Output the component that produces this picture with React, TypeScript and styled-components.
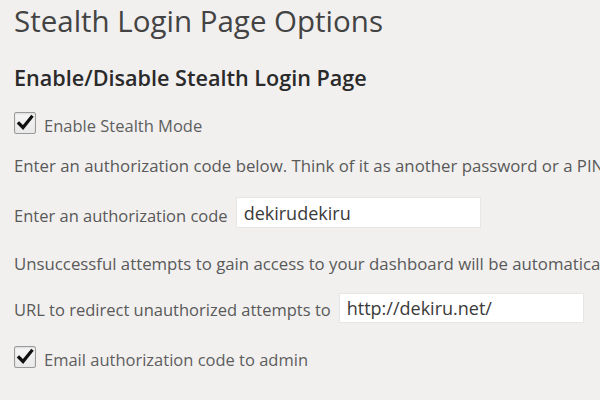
import React from "react";
import styled, { createGlobalStyle } from "styled-components";

const Global = createGlobalStyle`
  html, body { margin: 0; padding: 0; background: #f1f0ef; }
  body { width: 600px; height: 400px; overflow: hidden; }
  * { box-sizing: border-box; }
`;

const Page = styled.div`
  width: 600px;
  height: 400px;
  overflow: hidden;
  padding-left: 14px;
  background: #f1f0ef;
  font-family: "Open Sans", "Noto Sans", sans-serif;
  display: flex;
  flex-direction: column;
  white-space: nowrap;
`;

const Title = styled.h1`
  margin: 3px 0 0;
  font-size: 29.5px;
  line-height: 36px;
  font-weight: 400;
  color: #434343;
`;

const Subtitle = styled.h2`
  margin: 25px 0 0;
  font-size: 21.6px;
  line-height: 28px;
  font-weight: 600;
  color: #2a2a2a;
`;

const CheckRow = styled.label<{ $mt: number }>`
  margin-top: ${(p) => p.$mt}px;
  display: flex;
  align-items: flex-start;
  gap: 8px;
  height: 27px;
`;

const Box = styled.span`
  width: 22px;
  height: 22px;
  flex: none;
  border: 1px solid #9a9a9a;
  border-radius: 2px;
  background: linear-gradient(#f7f7f7, #e9e9e9);
  box-shadow: inset 0 1px 2px rgba(0, 0, 0, 0.12);
  display: flex;
  align-items: center;
  justify-content: center;
`;

const CheckLabel = styled.span`
  font-size: 16.5px;
  line-height: 27px;
  color: #5e5e5e;
`;

const Para = styled.p<{ $mt: number }>`
  margin: ${(p) => p.$mt}px 0 0;
  font-size: 16.8px;
  line-height: 24px;
  color: #595959;
`;

const FieldRow = styled.div<{ $mt: number; $h: number }>`
  margin-top: ${(p) => p.$mt}px;
  display: flex;
  align-items: flex-start;
  gap: 8px;
  height: ${(p) => p.$h}px;
`;

const FieldLabel = styled.span<{ $h: number; $nudge: number }>`
  font-size: 16.5px;
  line-height: ${(p) => p.$h}px;
  margin-top: ${(p) => p.$nudge}px;
  color: #595959;
`;

const Input = styled.input<{ $h: number }>`
  width: 245px;
  height: ${(p) => p.$h}px;
  padding: 0 7px;
  border: 1px solid #e6e6e6;
  background: #fff;
  font-family: "Open Sans", "Noto Sans", sans-serif;
  font-size: 18px;
  color: #3a3a3a;
  outline: none;
  border-radius: 0;
`;

const Check = () => (
  <Box>
    <svg width="18" height="18" viewBox="0 0 18 18">
      <path d="M3 9.5 L7 13.5 L15.5 3" fill="none" stroke="#111" strokeWidth="3.2" strokeLinecap="square" />
    </svg>
  </Box>
);

export default function App() {
  return (
    <>
      <Global />
      <Page>
        <Title>Stealth Login Page Options</Title>
        <Subtitle>Enable/Disable Stealth Login Page</Subtitle>
        <CheckRow $mt={20}>
          <Check />
          <CheckLabel>Enable Stealth Mode</CheckLabel>
        </CheckRow>
        <Para $mt={15}>
          Enter an authorization code below. Think of it as another password or a PIN number.
        </Para>
        <FieldRow $mt={19} $h={31}>
          <FieldLabel $h={31} $nudge={3}>Enter an authorization code</FieldLabel>
          <Input $h={31} defaultValue="dekirudekiru" />
        </FieldRow>
        <Para $mt={24}>
          Unsuccessful attempts to gain access to your dashboard will be automatically redirected.
        </Para>
        <FieldRow $mt={17} $h={30}>
          <FieldLabel $h={30} $nudge={2}>URL to redirect unauthorized attempts to</FieldLabel>
          <Input $h={30} defaultValue="http://dekiru.net/" />
        </FieldRow>
        <CheckRow $mt={23}>
          <Check />
          <CheckLabel>Email authorization code to admin</CheckLabel>
        </CheckRow>
      </Page>
    </>
  );
}
